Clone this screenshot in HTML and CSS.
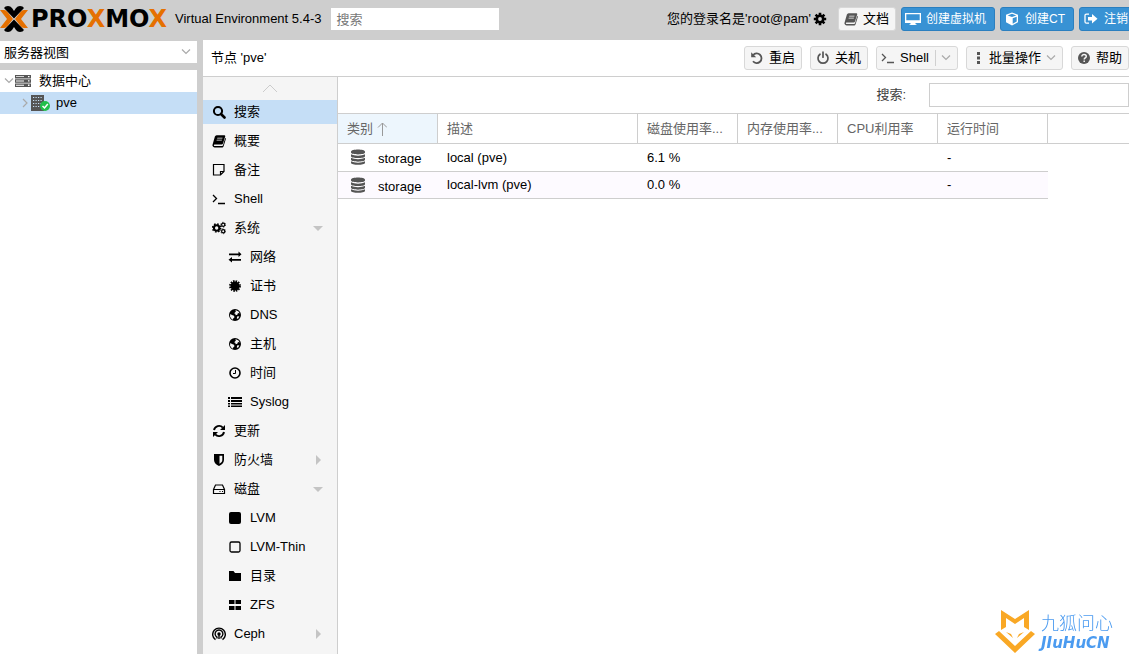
FILE: index.html
```
<!DOCTYPE html>
<html lang="zh-CN">
<head>
    <meta charset="utf-8">
    <title>pve - Proxmox Virtual Environment</title>
    <meta name="viewport" content="width=device-width, initial-scale=1.0">
    <link rel="stylesheet" href="styles.css">
</head>
<body>
    <!-- 图标库 -->
    <svg class="sprite" aria-hidden="true">
        <symbol id="i-search" viewBox="0 0 14 14"><circle cx="6" cy="6" r="4.1" fill="none" stroke="currentColor" stroke-width="2"/><path d="M9 9l3.5 3.5" stroke="currentColor" stroke-width="2.6" stroke-linecap="round"/></symbol>
        <symbol id="i-book" viewBox="0 0 14 14"><path fill="currentColor" fill-rule="evenodd" d="M4.6 1.3h7.8q1.1.2.8 1.3l-2.2 7q-.3 1-1.3 1H2.6q-.9.1-.7.8.2.5.9.5h7.4q.6 0 .8-.6l2.3-7.5q.8.5.5 1.4l-2.2 7q-.4 1.2-1.5 1.2H2.6Q1.2 13.2.6 12q-.3-.8 0-1.6L2.9 2.6q.4-1.2 1.7-1.3zM5.4 3.7l-.3.8h5.2l.3-.8zM4.8 5.7l-.3.8h5.2l.3-.8z"/></symbol>
        <symbol id="i-note" viewBox="0 0 14 14"><path fill="none" stroke="currentColor" stroke-width="1.2" d="M1.5 1.5h10.5v7l-3.5 3.5h-7zM12 8.5H8.5V12"/></symbol>
        <symbol id="i-terminal" viewBox="0 0 14 14"><path fill="none" stroke="currentColor" stroke-width="1.3" d="M1 3l3.500 3.500L1 10M6 11.500h7"/></symbol>
        <symbol id="i-gear" viewBox="0 0 14 14"><g fill="none" stroke="currentColor"><circle cx="7" cy="7" r="3.200" stroke-width="2.600"/><path stroke-width="2.600" d="M7 .8v3M7 10.200v3M.8 7h3M10.200 7h3M2.600 2.600l2 2M9.400 9.400l2 2M2.600 11.400l2-2M9.400 4.600l2-2"/></g></symbol>
        <symbol id="i-gears" viewBox="0 0 15 14"><g fill="none" stroke="currentColor"><circle cx="5" cy="7" r="2.900" stroke-width="2.200"/><circle cx="5" cy="7" r="4.300" stroke-width="1.700" stroke-dasharray="1.700 1.677"/><circle cx="12" cy="3.500" r="1.700" stroke-width="1.300"/><circle cx="12" cy="3.500" r="2.600" stroke-dasharray="1.200 1.522"/><circle cx="12" cy="10.500" r="1.700" stroke-width="1.300"/><circle cx="12" cy="10.500" r="2.600" stroke-dasharray="1.200 1.522"/></g></symbol>
        <symbol id="i-exchange" viewBox="0 0 14 14"><path fill="currentColor" d="M1 3.500h9.500v-2L13.500 4.300l-3 2.700V5.200H1zM13 9H4V7L.5 9.800 4 12.500v-1.800h9z"/></symbol>
        <symbol id="i-cert" viewBox="0 0 14 14"><circle cx="7" cy="7" r="4.500" fill="currentColor"/><circle cx="7" cy="7" r="4.900" fill="none" stroke="currentColor" stroke-width="2" stroke-dasharray="1.500 1.066"/></symbol>
        <symbol id="i-globe" viewBox="0 0 14 14"><path fill="currentColor" fill-rule="evenodd" d="M7 1a6 6 0 1 0 0 12A6 6 0 0 0 7 1zM7.500 2l3 1.400 1.200 2-1.700-.4-.7 1.700-1.600.5-.4-1.400-1.200-.5 1.700-1.500zM2.300 6l1.700 1 2 .8.500 1.500-1.300 1.200-.3 1.200-1.700-1.200L2 8.500zM9 8.500l2.300-.3-.8 2-1.600.8z"/></symbol>
        <symbol id="i-clock" viewBox="0 0 14 14"><circle cx="7" cy="7" r="5" fill="none" stroke="currentColor" stroke-width="1.600"/><path fill="none" stroke="currentColor" d="M7.500 4v3.500H5"/></symbol>
        <symbol id="i-list" viewBox="0 0 14 14"><path fill="currentColor" d="M0 2h2v2H0zM3 2h11v2H3zM0 5h2v2H0zM3 5h11v2H3zM0 8h2v1.500H0zM3 8h11v1.500H3zM0 10.500h2V12H0zM3 10.500h11V12H3z"/></symbol>
        <symbol id="i-refresh" viewBox="0 0 14 14"><path fill="none" stroke="currentColor" stroke-width="1.900" d="M2 6a5.100 5.100 0 0 1 8.800-2.400M12 8a5.100 5.100 0 0 1-8.800 2.400"/><path fill="currentColor" d="M13 1v5H8zM1 13V8h5z"/></symbol>
        <symbol id="i-shield" viewBox="0 0 14 14"><path fill="currentColor" fill-rule="evenodd" d="M2 1h10v6c0 3-2.500 5-5 6-2.500-1-5-3-5-6zM7.500 2.800v7.900C9.500 9.600 10.300 8.400 10.300 7V2.800z"/></symbol>
        <symbol id="i-hdd" viewBox="0 0 14 14"><path fill="none" stroke="currentColor" stroke-width="1.200" d="M1.500 7.500l2-4.500h7l2 4.500V11.500h-11zM1.500 7.500h11M7.500 9.500h1M10 9.500h1"/></symbol>
        <symbol id="i-square" viewBox="0 0 14 14"><rect x="1" y="1" width="12" height="12" rx="2" fill="currentColor"/></symbol>
        <symbol id="i-square-o" viewBox="0 0 14 14"><rect x="2" y="2" width="10" height="10" rx="1.500" fill="none" stroke="currentColor" stroke-width="1.300"/></symbol>
        <symbol id="i-folder" viewBox="0 0 14 14"><path fill="currentColor" d="M1 2h4.500L7 4h6v8H1z"/></symbol>
        <symbol id="i-large" viewBox="0 0 14 14"><path fill="currentColor" d="M1 2h5.500v4H1zM7.500 2H13v4H7.500zM1 8h5.500v4H1zM7.500 8H13v4H7.500z"/></symbol>
        <symbol id="i-ceph" viewBox="0 0 14 14"><g fill="none" stroke="currentColor" stroke-width="1.400"><path d="M3.500 12.700a6.300 6.300 0 1 1 7 0"/><path d="M5 11.500v-1.300a3.900 3.900 0 1 1 4 0v1.300"/><path d="M7 7v5"/></g><circle cx="7" cy="7" r="1.700" fill="currentColor"/></symbol>
        <symbol id="i-undo" viewBox="0 0 14 14"><path fill="none" stroke="currentColor" stroke-width="1.800" d="M3 4.200A4.800 4.800 0 1 1 3 10.300"/><path fill="currentColor" d="M1.200 1.300v5h5z"/></symbol>
        <symbol id="i-power" viewBox="0 0 14 14"><path fill="none" stroke="currentColor" stroke-width="1.700" stroke-linecap="round" d="M4 3.200a5 5 0 1 0 6 0M7 1.200v5"/></symbol>
        <symbol id="i-dots" viewBox="0 0 12 14"><path fill="currentColor" d="M5 1h3v3H5zM5 5.500h3v3H5zM5 10h3v3H5z"/></symbol>
        <symbol id="i-help" viewBox="0 0 14 14"><circle cx="7" cy="7" r="6" fill="currentColor"/><path fill="none" stroke="#f5f5f5" stroke-width="1.500" d="M4.800 5.600c0-3 4.500-2.600 4.500-.3C9.300 6.900 7.200 7 7.200 8.500M7.200 9.600v1.500"/></symbol>
        <symbol id="i-desktop" viewBox="0 0 16 14"><path fill="currentColor" fill-rule="evenodd" d="M0 1h16v10h-5.500v1.300h1V13h-7v-.7h1V11H0zM1.300 2.300v6h13.400v-6z"/></symbol>
        <symbol id="i-cube" viewBox="0 0 14 14"><path fill="currentColor" fill-rule="evenodd" d="M7 .5l6 2.300v7.500l-6 3.200-6-3.200V2.800zM7 1.800L2.700 3.400 7 5l4.300-1.600zM7.700 6.200v5.500l4-2.100V4.700z"/></symbol>
        <symbol id="i-out" viewBox="0 0 14 14"><path fill="none" stroke="currentColor" stroke-width="1.300" d="M5 2.200H2.500Q1 2.200 1 3.700v6q0 1.500 1.500 1.500H5"/><path fill="currentColor" d="M4 5h4V2l5.500 4.700L8 11.500v-3H4z"/></symbol>
        <symbol id="i-server" viewBox="0 0 16 14"><path fill="currentColor" fill-rule="evenodd" d="M0 1h16v3.500H0zM0 5.300h16v3.500H0zM0 9.600h16v3.500H0zM1 2.200v.9h8v-.9zM1 6.500v.9h8v-.9zM1 10.800v.9h8v-.9zM13 2v1.300h1.500V2zM13 6.300v1.300h1.500V6.300zM13 10.600v1.300h1.500v-1.300z"/></symbol>
        <symbol id="i-node" viewBox="0 0 20 16"><path fill="#555" d="M0 0h13v16H0z"/><path stroke="#c5def6" stroke-width="1.200" stroke-dasharray="1.200 1.300" d="M2 2.500h9.500M2 5.500h9.500M2 8.500h9.500M2 11.500h9.500"/><circle cx="14" cy="11" r="5" fill="#21bf4b"/><path fill="none" stroke="#fff" stroke-width="1.500" d="M11.500 11l2 2 3.300-4"/></symbol>
        <symbol id="i-db" viewBox="0 0 14 16"><path fill="currentColor" d="M0 2.600C0-.3 14-.3 14 2.600v1c0 2.500-14 2.500-14 0zM0 5.200c3 1.900 11 1.900 14 0v2c0 2.500-14 2.500-14 0zM0 8.800c3 1.900 11 1.900 14 0v2c0 2.500-14 2.500-14 0zM0 12.300c3 1.900 11 1.900 14 0v1.500c0 2.700-14 2.700-14 0z"/></symbol>
        <symbol id="i-down" viewBox="0 0 10 6"><path fill="none" stroke="currentColor" stroke-width="1.200" d="M1 .5l4 4 4-4"/></symbol>
        <symbol id="i-right" viewBox="0 0 6 10"><path fill="none" stroke="currentColor" stroke-width="1.200" d="M1 1l4 4-4 4"/></symbol>
        <symbol id="i-up" viewBox="0 0 16 9"><path fill="none" stroke="currentColor" d="M1 8l7-7 7 7"/></symbol>
        <symbol id="i-sort" viewBox="0 0 10 14"><path fill="none" stroke="currentColor" d="M5.500 14V1M1 5.500L5.500 1 10 5.500"/></symbol>
    </svg>

    <!-- 顶栏 -->
    <header class="topbar">
        <a class="logo" href="#">
            <svg class="logo-mark" viewBox="0 0 28 26" aria-hidden="true">
                <path fill="#e57000" d="M0 4h4q2 0 3.500 2l5.500 7-5.500 7Q6 22 4 22H0l7-9zM28 4h-4q-2 0-3.500 2L15 13l5.500 7q1.500 2 3.500 2h4l-7-9z"/>
                <path fill="#000" d="M4 2q1-2 4-2 2.500 0 4 2l2 3 2-3q1.500-2 4-2 3 0 4 2L14 12.500zM4 24q1 2 4 2 2.500 0 4-2l2-3 2 3q1.500 2 4 2 3 0 4-2L14 13.500z"/>
            </svg>
            <span class="logo-text">PRO<span class="orange">X</span>MO<span class="orange">X</span></span>
        </a>
        <span class="version">Virtual Environment 5.4-3</span>
        <input class="global-search" type="text" placeholder="搜索" aria-label="搜索">
        <div class="top-actions">
            <span class="user">您的登录名是'root@pam'</span>
            <button class="gear-btn" aria-label="设置"><svg class="icon"><use href="#i-gear"/></svg></button>
            <button class="btn"><svg class="icon"><use href="#i-book"/></svg>文档</button>
            <button class="btn blue"><svg class="icon"><use href="#i-desktop"/></svg>创建虚拟机</button>
            <button class="btn blue"><svg class="icon"><use href="#i-cube"/></svg>创建CT</button>
            <button class="btn blue"><svg class="icon"><use href="#i-out"/></svg>注销</button>
        </div>
    </header>

    <div class="workspace">
        <!-- 资源树 -->
        <aside class="sidebar">
            <div class="view-picker">
                <select class="view-select" aria-label="视图">
                    <option>服务器视图</option>
                    <option>文件夹视图</option>
                </select>
                <svg class="view-arrow chevron"><use href="#i-down"/></svg>
            </div>
            <div class="tree">
                <a class="tree-row" href="#"><svg class="chevron"><use href="#i-down"/></svg><svg class="icon wide dark"><use href="#i-server"/></svg>数据中心</a>
                <a class="tree-row child selected" href="#"><svg class="chevron side"><use href="#i-right"/></svg><svg class="node-icon"><use href="#i-node"/></svg>pve</a>
            </div>
        </aside>

        <main class="content">
            <div class="title-bar">
                <h1 class="title">节点 'pve'</h1>
                <button class="btn"><svg class="icon"><use href="#i-undo"/></svg>重启</button>
                <button class="btn"><svg class="icon"><use href="#i-power"/></svg>关机</button>
                <div class="split-btn">
                    <button class="btn"><svg class="icon"><use href="#i-terminal"/></svg>Shell</button>
                    <button class="split-arrow" aria-label="Shell 选项"><svg class="chevron"><use href="#i-down"/></svg></button>
                </div>
                <button class="btn"><svg class="icon narrow"><use href="#i-dots"/></svg>批量操作<svg class="chevron"><use href="#i-down"/></svg></button>
                <button class="btn"><svg class="icon"><use href="#i-help"/></svg>帮助</button>
            </div>

            <div class="panel">
                <nav class="menu">
                    <button class="menu-scroll" aria-label="向上滚动"><svg class="up-arrow"><use href="#i-up"/></svg></button>
                    <a class="menu-item selected" href="#"><svg class="icon"><use href="#i-search"/></svg>搜索</a>
                    <a class="menu-item" href="#"><svg class="icon"><use href="#i-book"/></svg>概要</a>
                    <a class="menu-item" href="#"><svg class="icon"><use href="#i-note"/></svg>备注</a>
                    <a class="menu-item" href="#"><svg class="icon"><use href="#i-terminal"/></svg>Shell</a>
                    <a class="menu-item open" href="#"><svg class="icon"><use href="#i-gears"/></svg>系统</a>
                    <a class="menu-item sub" href="#"><svg class="icon"><use href="#i-exchange"/></svg>网络</a>
                    <a class="menu-item sub" href="#"><svg class="icon"><use href="#i-cert"/></svg>证书</a>
                    <a class="menu-item sub" href="#"><svg class="icon"><use href="#i-globe"/></svg>DNS</a>
                    <a class="menu-item sub" href="#"><svg class="icon"><use href="#i-globe"/></svg>主机</a>
                    <a class="menu-item sub" href="#"><svg class="icon"><use href="#i-clock"/></svg>时间</a>
                    <a class="menu-item sub" href="#"><svg class="icon"><use href="#i-list"/></svg>Syslog</a>
                    <a class="menu-item" href="#"><svg class="icon"><use href="#i-refresh"/></svg>更新</a>
                    <a class="menu-item closed" href="#"><svg class="icon"><use href="#i-shield"/></svg>防火墙</a>
                    <a class="menu-item open" href="#"><svg class="icon"><use href="#i-hdd"/></svg>磁盘</a>
                    <a class="menu-item sub" href="#"><svg class="icon"><use href="#i-square"/></svg>LVM</a>
                    <a class="menu-item sub" href="#"><svg class="icon"><use href="#i-square-o"/></svg>LVM-Thin</a>
                    <a class="menu-item sub" href="#"><svg class="icon"><use href="#i-folder"/></svg>目录</a>
                    <a class="menu-item sub" href="#"><svg class="icon"><use href="#i-large"/></svg>ZFS</a>
                    <a class="menu-item closed" href="#"><svg class="icon"><use href="#i-ceph"/></svg>Ceph</a>
                </nav>

                <section class="grid-panel">
                    <div class="grid-toolbar">
                        <label for="gridSearch">搜索:</label>
                        <input id="gridSearch" class="grid-search" type="text">
                    </div>
                    <table class="grid">
                        <colgroup>
                            <col class="col-m"><col class="col-l"><col class="col-m"><col class="col-m"><col class="col-m"><col class="col-time"><col>
                        </colgroup>
                        <thead>
                            <tr>
                                <th class="sorted">类别<svg class="sort-arrow"><use href="#i-sort"/></svg></th>
                                <th>描述</th>
                                <th>磁盘使用率...</th>
                                <th>内存使用率...</th>
                                <th>CPU利用率</th>
                                <th>运行时间</th>
                                <th></th>
                            </tr>
                        </thead>
                        <tbody>
                            <tr class="first">
                                <td class="type"><svg class="db-icon"><use href="#i-db"/></svg>storage</td>
                                <td>local (pve)</td>
                                <td>6.1 %</td>
                                <td></td>
                                <td></td>
                                <td>-</td>
                            </tr>
                            <tr class="alt">
                                <td class="type"><svg class="db-icon"><use href="#i-db"/></svg>storage</td>
                                <td>local-lvm (pve)</td>
                                <td>0.0 %</td>
                                <td></td>
                                <td></td>
                                <td>-</td>
                            </tr>
                        </tbody>
                    </table>
                </section>
            </div>
        </main>
    </div>

    <!-- 水印 -->
    <div class="watermark">
        <svg class="fox" viewBox="0 0 40 44" aria-hidden="true">
            <path fill="#f9a825" d="M6 0l14 9 14-9v20l-5-3V8l-9 6-9-6v9l-5 3zM0 24l4-3 16 15 16-15 4 3-20 19z"/>
            <path fill="#f9a825" d="M11 22l5 2 2 4zM29 22l-5 2-2 4z"/>
        </svg>
        <div class="mark-text">
            <span class="mark-cn">九狐问心</span>
            <span class="mark-en">JIuHuCN</span>
        </div>
    </div>
</body>
</html>
```
FILE: styles.css
```
/* 基础样式 */
* {
    box-sizing: border-box;
}

body {
    margin: 0;
    height: 100vh;
    display: flex;
    flex-direction: column;
    overflow: hidden;
    background: #fff;
    color: #000;
    font: 13px/20px "Liberation Sans", "Noto Sans CJK SC", sans-serif;
}

button, input, select {
    font: inherit;
    color: inherit;
}

a {
    color: inherit;
    text-decoration: none;
}

svg {
    flex: none;
}

.sprite {
    position: absolute;
    width: 0;
    height: 0;
}

.icon {
    width: 14px;
    height: 14px;
}

.wide {
    width: 16px;
}

.narrow {
    width: 12px;
}

.dark {
    color: #555;
}

.chevron {
    width: 10px;
    height: 6px;
    color: #aaa;
}

.chevron.side {
    width: 6px;
    height: 10px;
}

/* 顶栏 */
.topbar {
    flex: none;
    display: flex;
    align-items: center;
    height: 40px;
    padding-bottom: 2px;
    background: #cecece;
    white-space: nowrap;
}

.logo {
    display: flex;
    align-items: center;
    gap: 3px;
    width: 167px;
    margin-right: 8px;
}

.logo-mark {
    width: 28px;
    height: 26px;
}

.logo-text {
    font: bold 24px/26px "DejaVu Sans", sans-serif;
}

.orange {
    color: #e57000;
}

.global-search {
    width: 168px;
    height: 22px;
    margin-left: 10px;
    padding: 0 5px;
    border: 0;
    background: #fff;
}

.global-search::placeholder {
    color: #777;
}

.top-actions {
    display: flex;
    align-items: center;
    gap: 5px;
    margin-left: auto;
    margin-right: -8px;
}

.gear-btn {
    display: flex;
    margin: 0 6px 0 -3px;
    padding: 0;
    border: 0;
    background: none;
}

/* 按钮 */
.btn {
    display: flex;
    align-items: center;
    gap: 5px;
    height: 24px;
    padding: 0 6px 0 5px;
    border: 1px solid #d8d8d8;
    border-radius: 3px;
    background: #f5f5f5;
    white-space: nowrap;
}

.btn .icon {
    color: #555;
}

.btn.blue {
    padding: 0 8px 0 3px;
    border-color: #2b7fbf;
    background: #3892d4;
    color: #fff;
    font-size: 12px;
}

.btn.blue .icon {
    width: 16px;
    color: #fff;
}

.split-btn {
    display: flex;
    align-items: center;
    border: 1px solid #d8d8d8;
    border-radius: 3px;
    background: #f5f5f5;
}

.split-btn .btn {
    height: 22px;
    padding: 0 6px 0 4px;
    border: 0;
}

.split-arrow {
    display: flex;
    align-items: center;
    height: 16px;
    padding: 0 6px 0 5px;
    border: 0;
    border-left: 1px solid #d0d0d0;
    background: none;
}

/* 主体 */
.workspace {
    flex: 1;
    display: flex;
    min-height: 0;
}

.sidebar {
    display: flex;
    flex-direction: column;
    gap: 7px;
    width: 203px;
    padding-top: 1px;
    border-right: 6px solid #cecece;
    background: #cecece;
}

.view-picker {
    position: relative;
    height: 22px;
}

.view-select {
    display: block;
    width: 100%;
    height: 22px;
    padding: 2px 4px 0;
    border: 0;
    border-radius: 0;
    background: #fff;
    appearance: none;
}

.view-arrow {
    position: absolute;
    top: 8px;
    right: 6px;
}

.tree {
    flex: 1;
    background: #fff;
}

.tree-row {
    display: flex;
    align-items: center;
    gap: 8px;
    height: 22px;
    padding-left: 4px;
}

.tree-row .chevron {
    margin-right: -7px;
}

.tree-row.child {
    gap: 5px;
    padding-left: 22px;
}

.tree-row.child .chevron {
    margin-right: -2px;
}

.selected {
    background: #c5def6;
}

.node-icon {
    width: 20px;
    height: 16px;
}

.content {
    flex: 1;
    display: flex;
    flex-direction: column;
    min-width: 0;
}

.title-bar {
    flex: none;
    display: flex;
    align-items: center;
    gap: 8px;
    height: 37px;
    border-bottom: 1px solid #cecece;
}

.title {
    margin: 0 auto 0 8px;
    font-size: 13px;
    font-weight: normal;
}

/* 节点菜单 */
.panel {
    flex: 1;
    display: flex;
    min-height: 0;
}

.menu {
    display: flex;
    flex-direction: column;
    gap: 5px;
    width: 135px;
    overflow: hidden;
    border-right: 1px solid #cecece;
    background: #f5f5f5;
}

.menu-scroll {
    flex: none;
    display: flex;
    justify-content: center;
    align-items: center;
    height: 23px;
    margin-bottom: -5px;
    padding: 0;
    border: 0;
    background: none;
}

.up-arrow {
    width: 16px;
    height: 9px;
    color: #ccc;
}

.menu-item {
    flex: none;
    display: flex;
    align-items: center;
    gap: 8px;
    height: 24px;
    padding: 0 14px 0 9px;
}

.menu-item.sub {
    padding-left: 25px;
}

.open::after,
.closed::after {
    content: "";
    margin-left: auto;
    border: 5px solid transparent;
}

.open::after {
    border-top-color: #c4c4c4;
    border-bottom: 0;
}

.closed::after {
    border-left-color: #c4c4c4;
    border-right: 0;
    margin-right: 2px;
}

/* 资源表格 */
.grid-panel {
    flex: 1;
    min-width: 0;
}

.grid-toolbar {
    display: flex;
    justify-content: flex-end;
    align-items: center;
    gap: 23px;
    height: 36px;
    color: #404040;
}

.grid-search {
    width: 200px;
    height: 24px;
    border: 1px solid #cecece;
}

.grid {
    width: 100%;
    table-layout: fixed;
    border-spacing: 0;
}

.col-m {
    width: 100px;
}

.col-l {
    width: 200px;
}

.col-time {
    width: 110px;
}

.grid th {
    height: 31px;
    padding: 0 9px;
    border: 1px solid #cecece;
    border-left: 0;
    color: #666;
    font-weight: normal;
    text-align: left;
    white-space: nowrap;
}

.grid th:last-child {
    border-right: 0;
}

.grid .sorted {
    background: #edf6fd;
}

.sort-arrow {
    width: 10px;
    height: 14px;
    margin-left: 4px;
    color: #999;
    vertical-align: middle;
}

.grid td {
    height: 27px;
    padding: 0 9px;
    border-bottom: 1px solid #cecece;
    white-space: nowrap;
}

.grid .first td {
    height: 28px;
}

.grid .type {
    padding: 3px 0 0 13px;
}

.db-icon {
    width: 14px;
    height: 16px;
    margin-right: 13px;
    color: #555;
    vertical-align: -2px;
}

.alt td {
    background: #fdfaff;
}

/* 水印 */
.watermark {
    position: fixed;
    right: 16px;
    bottom: 0;
    display: flex;
    align-items: center;
    gap: 6px;
}

.fox {
    width: 40px;
    height: 44px;
}

.mark-text {
    display: flex;
    flex-direction: column;
    color: #4b9bf0;
}

.mark-cn {
    font-size: 18px;
    line-height: 22px;
    font-weight: 300;
}

.mark-en {
    font: italic bold 15px/16px "DejaVu Sans", sans-serif;
}
```
